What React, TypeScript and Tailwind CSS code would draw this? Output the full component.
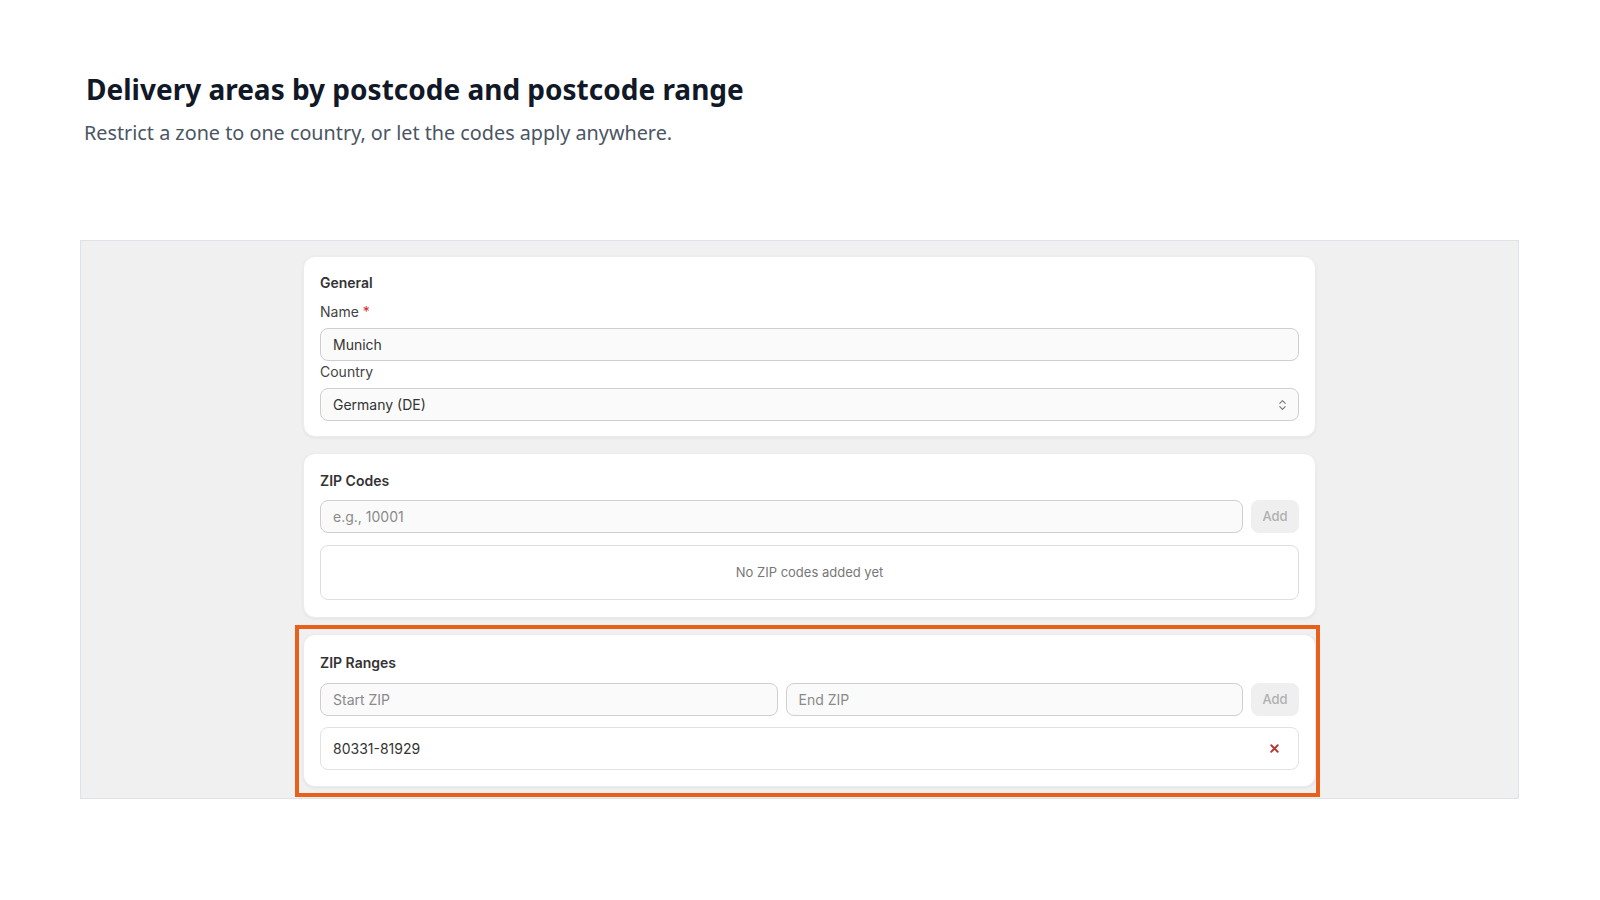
import { ChevronsUpDown, X } from "lucide-react";

const inputClass =
  "h-[33px] w-full rounded-lg border border-[#cfcfcf] bg-[#fafafa] px-3 text-[14px] text-[#333] outline-none placeholder:text-[#8a8a8a]";

function Card({ children, className = "" }: { children: React.ReactNode; className?: string }) {
  return (
    <div
      className={
        "rounded-xl border border-[#ececec] bg-white px-4 shadow-[0_1px_3px_rgba(0,0,0,0.06)] " +
        className
      }
    >
      {children}
    </div>
  );
}

function AddButton() {
  return (
    <button
      type="button"
      disabled
      className="h-[33px] w-12 shrink-0 rounded-lg bg-[#efefef] text-[13px] font-medium text-[#b0b0b0]"
    >
      Add
    </button>
  );
}

export default function App() {
  return (
    <main className="min-h-screen bg-white pl-20 pr-[81px] pt-[71px] font-['Segoe_UI','Noto_Sans',sans-serif]">
      {/* Heading */}
      <h1 className="pl-[6px] text-[28px] font-bold leading-9 text-[#111827]">
        Delivery areas by postcode and postcode range
      </h1>
      <p className="mt-3 pl-[4px] text-[19.8px] leading-7 text-[#4b5563]">
        Restrict a zone to one country, or let the codes apply anywhere.
      </p>

      {/* Zone editor preview */}
      <div className="mt-[93px] flex flex-col gap-4 border border-[#dde3ea] bg-[#f0f0f0] pb-[11px] pl-[222px] pr-[202px] pt-[15px] font-['Inter',sans-serif]">
        {/* General */}
        <Card className="pb-[15px] pt-4">
          <div className="text-[14px] font-semibold leading-5 text-[#333]">General</div>
          <label className="mt-[9px] block text-[14px] leading-5 text-[#444]">
            Name <span className="text-[#d03030]">*</span>
          </label>
          <input className={inputClass + " mt-[6px]"} defaultValue="Munich" />
          <label className="mt-[1px] block text-[14px] leading-5 text-[#444]">Country</label>
          <div className="relative mt-[6px]">
            <select className={inputClass + " appearance-none"} defaultValue="DE">
              <option value="DE">Germany (DE)</option>
            </select>
            <ChevronsUpDown
              className="pointer-events-none absolute right-[10px] top-1/2 -translate-y-1/2 text-[#777]"
              size={13}
              strokeWidth={2}
            />
          </div>
        </Card>

        {/* ZIP codes */}
        <Card className="pb-[17px] pt-[17px]">
          <div className="text-[14px] font-semibold leading-5 text-[#333]">ZIP Codes</div>
          <div className="mt-[9px] flex gap-2">
            <input className={inputClass} placeholder="e.g., 10001" />
            <AddButton />
          </div>
          <div className="mt-3 flex h-[55px] items-center justify-center rounded-lg border border-[#dedede] text-[13px] text-[#777]">
            No ZIP codes added yet
          </div>
        </Card>

        {/* ZIP ranges, highlighted */}
        <div className="relative">
          <Card className="pb-4 pt-[18px]">
            <div className="text-[14px] font-semibold leading-5 text-[#333]">ZIP Ranges</div>
            <div className="mt-[10px] flex gap-2">
              <input className={inputClass} placeholder="Start ZIP" />
              <input className={inputClass} placeholder="End ZIP" />
              <AddButton />
            </div>
            <div className="mt-[11px] flex h-[43px] items-center justify-between rounded-lg border border-[#e2e2e2] pl-3 pr-[17px] text-[14px] text-[#333]">
              <span>80331-81929</span>
              <X size={13} strokeWidth={3.5} className="text-[#b83838]" />
            </div>
          </Card>
          <div className="pointer-events-none absolute -bottom-[10px] -left-2 -right-1 -top-[9px] border-4 border-[#e8601c]" />
        </div>
      </div>
    </main>
  );
}
